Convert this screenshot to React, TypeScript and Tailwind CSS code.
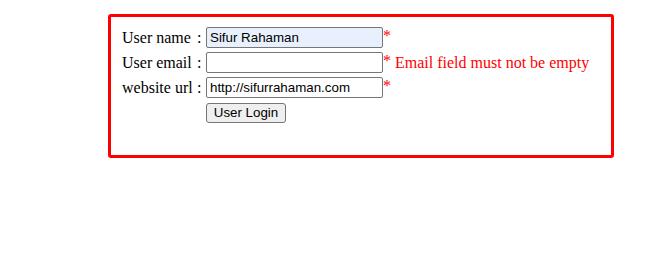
import React from "react";

const serif = { fontFamily: '"Liberation Serif", "Times New Roman", serif' };

function Row({ label, value, bg, error }: { label: string; value: string; bg?: string; error?: string }) {
  return (
    <div className="flex items-center h-[21px]">
      <div className="w-[75px] shrink-0 text-[16px] leading-[18px] text-black whitespace-nowrap">{label}</div>
      <div className="w-[9px] shrink-0 text-[16px] leading-[18px] text-black">:</div>
      <input
        readOnly
        value={value}
        className={`w-[177px] h-[21px] shrink-0 border border-[#767676] rounded-[2px] px-[3px] text-[13.33px] text-black outline-none ${bg ?? "bg-white"}`}
        style={{ fontFamily: '"Liberation Sans", Arial, sans-serif' }}
      />
      <span className="self-start text-[16px] leading-[18px] text-[#ff0000]">*</span>
      {error && (
        <span className="text-[16px] leading-[18px] text-[#ff0000] whitespace-nowrap pl-[4px]">{error}</span>
      )}
    </div>
  );
}

export default function App() {
  return (
    <div className="w-[649px] h-[274px] bg-white pt-[14px] pl-[108px]" style={serif}>
      <div className="w-[506px] h-[144px] border-[3px] border-[#ff0000] rounded-[3px] pl-[11px] pt-[10px] flex flex-col gap-[4px]">
        <Row label="User name" value="Sifur Rahaman" bg="bg-[#e8f0fe]" />
        <Row label="User email" value="" error="Email field must not be empty" />
        <Row label="website url" value="http://sifurrahaman.com" />
        <div className="flex pl-[84px] pt-[1px]">
          <button
            className="block w-[80px] h-[20px] bg-[#efefef] border border-[#767676] rounded-[3px] text-[13.33px] text-black leading-none"
            style={{ fontFamily: '"Liberation Sans", Arial, sans-serif' }}
          >
            User Login
          </button>
        </div>
      </div>
    </div>
  );
}
